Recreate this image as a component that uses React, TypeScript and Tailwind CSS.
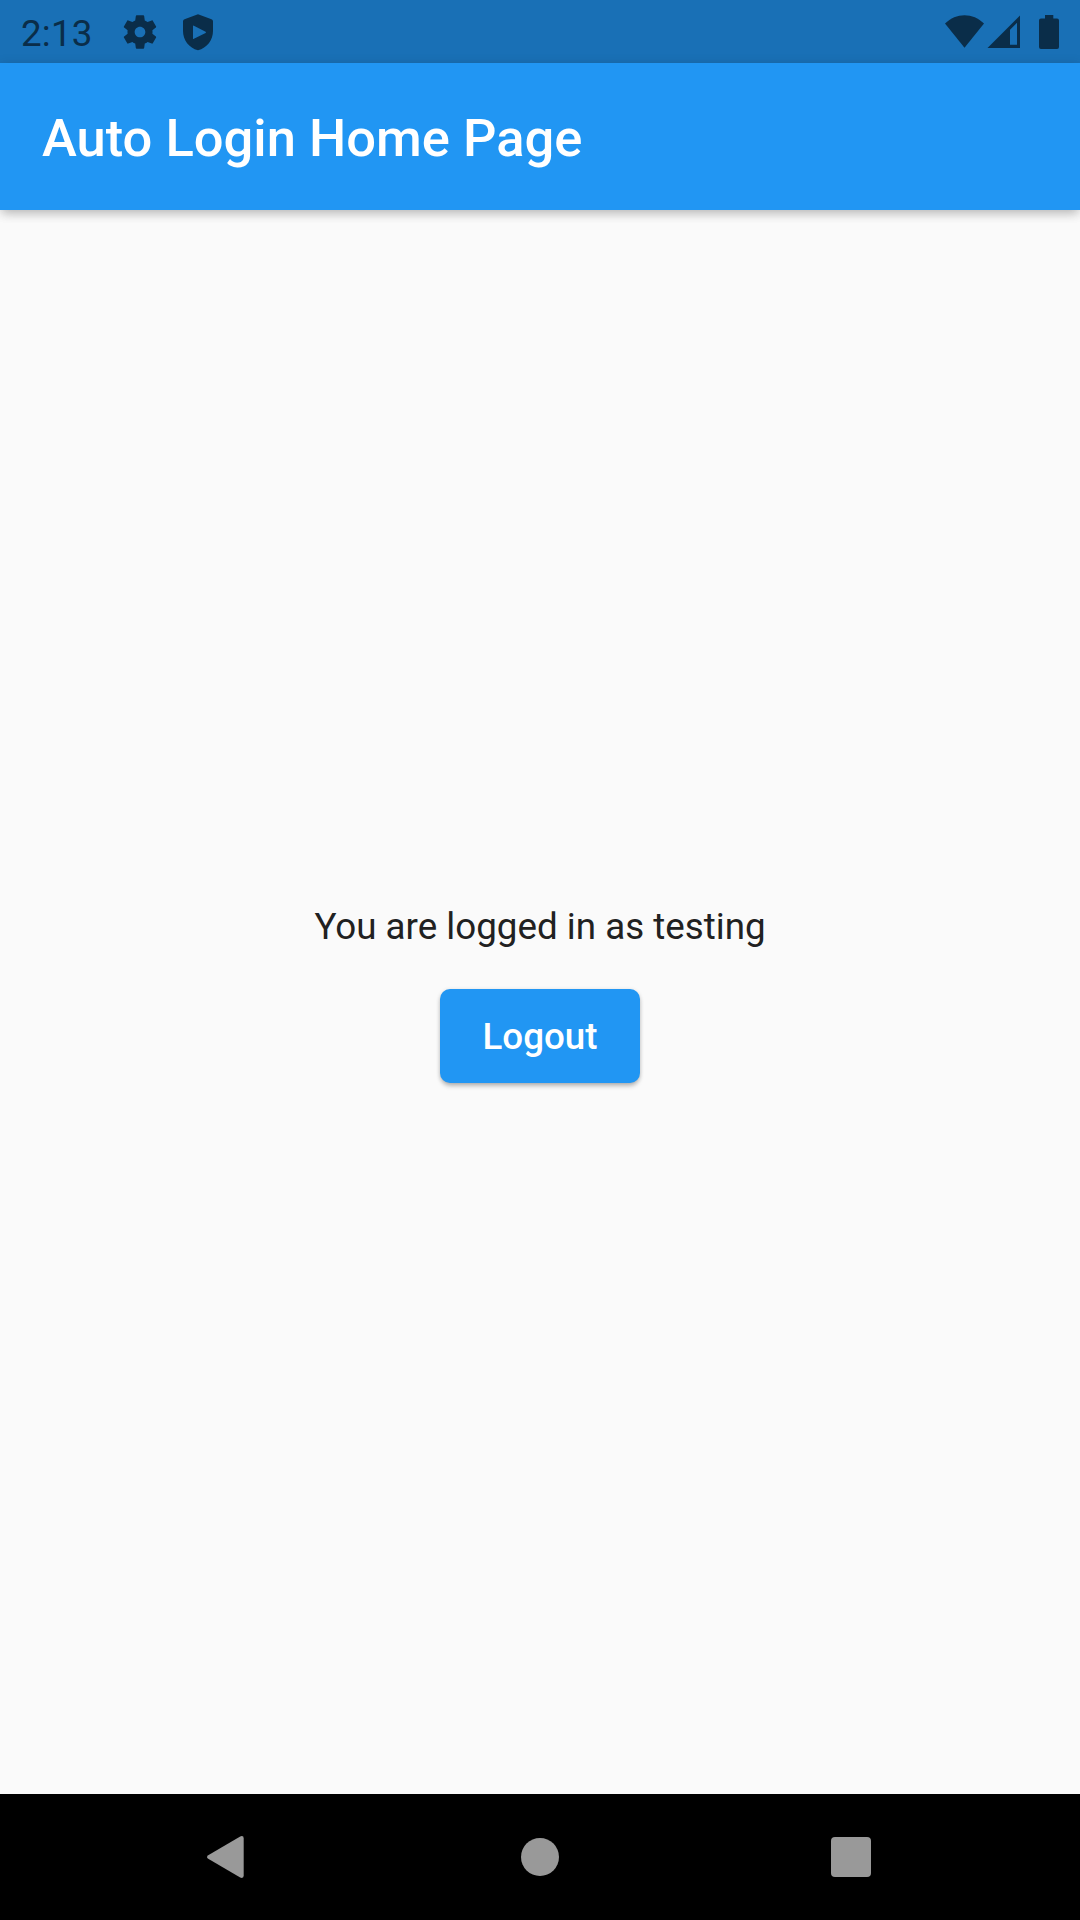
function StatusBar() {
  return (
    <div className="flex h-[63px] shrink-0 items-center bg-[#1970b6] pl-[21px] text-[#0a2d49]">
      <span className="w-[99px] pt-[3px] text-[36.75px] leading-[43px] tracking-[0.2px]">2:13</span>
      <svg className="h-[40px] w-[40px] shrink-0" viewBox="0 0 24 24" fill="currentColor">
        <path d="M19.43 12.98c.04-.32.07-.64.07-.98s-.03-.66-.07-.98l2.11-1.65c.19-.15.24-.42.12-.64l-2-3.46c-.12-.22-.39-.3-.61-.22l-2.49 1c-.52-.4-1.08-.73-1.69-.98l-.38-2.65C14.46 2.18 14.25 2 14 2h-4c-.25 0-.46.18-.49.42l-.38 2.65c-.61.25-1.17.59-1.69.98l-2.49-1c-.23-.09-.49 0-.61.22l-2 3.46c-.13.22-.07.49.12.64l2.11 1.65c-.04.32-.07.65-.07.98s.03.66.07.98l-2.11 1.65c-.19.15-.24.42-.12.64l2 3.46c.12.22.39.3.61.22l2.49-1c.52.4 1.08.73 1.69.98l.38 2.65c.03.24.24.42.49.42h4c.25 0 .46-.18.49-.42l.38-2.65c.61-.25 1.17-.59 1.69-.98l2.49 1c.23.09.49 0 .61-.22l2-3.46c.12-.22.07-.49-.12-.64l-2.11-1.65zM12 15.200c-1.770 0-3.200-1.430-3.200-3.200s1.430-3.200 3.200-3.200 3.200 1.430 3.200 3.200-1.430 3.200-3.200 3.200z" />
      </svg>
      <svg className="ml-[20px] h-[40px] w-[36px] shrink-0" viewBox="0 0 36 40" fill="currentColor">
        <path
          fillRule="evenodd"
          d="M18 2.300 L31.500 7.200 Q33 7.800 33 9.400 V19 C33 28 27 36 18 38.300 C9 36 3 28 3 19 V9.400 Q3 7.800 4.500 7.200 Z M13 14.200 V26.400 Q13 27.300 13.900 26.800 L25.600 20.900 Q26.400 20.300 25.600 19.700 L13.900 13.700 Q13 13.300 13 14.200 Z"
        />
      </svg>
      <svg className="mr-[21px] ml-auto h-[36px] w-[114px] shrink-0" viewBox="945 13 114 36" fill="currentColor">
        <path d="M945 22.500 C956 11.400 973 11.400 984 22.500 L964.500 46.700 Z" />
        <path fillRule="evenodd" d="M1020 14.500 V47 H987.500 Z M1010 28.700 V43.700 H1017 V21.700 Z" />
        <path d="M1045 14 H1053.300 V17.500 H1057 Q1059 17.500 1059 19.500 V46 Q1059 48 1057 48 H1041 Q1039 48 1039 46 V19.500 Q1039 17.500 1041 17.500 H1045 Z" />
      </svg>
    </div>
  );
}

function NavigationBar() {
  return (
    <div className="flex h-[126px] shrink-0 items-center justify-between bg-black pr-[209px] pl-[207px] text-[#999999]">
      <svg className="h-[42px] w-[42px]" viewBox="0 0 42 42" fill="currentColor">
        <path d="M1.200 19.200 L33.200 0.400 Q36.700 -0.800 36.700 2.500 V39.500 Q36.700 42.800 33.200 41.600 L1.200 22.800 Q-1.200 21 1.200 19.200 Z" />
      </svg>
      <div className="h-[38px] w-[38px] rounded-full bg-[#999999]" />
      <div className="h-[40px] w-[40px] rounded-[4px] bg-[#999999]" />
    </div>
  );
}

export default function App() {
  return (
    <div className="flex h-[1920px] w-[1080px] flex-col overflow-hidden bg-[#fafafa] font-['Roboto',sans-serif]">
      <StatusBar />
      <header className="flex h-[147px] shrink-0 items-center bg-[#2196f3] px-[42px] pt-[2px] shadow-[0_5px_10px_-2px_rgba(0,0,0,0.2),0_2px_12px_rgba(0,0,0,0.12)]">
        <h1 className="text-[52.5px] leading-[62px] font-medium text-white">Auto Login Home Page</h1>
      </header>
      <main className="flex flex-1 flex-col items-center pt-[695px]">
        <p className="text-[36.75px] leading-[43px] text-[#212121]">You are logged in as testing</p>
        <button className="mt-[41px] flex h-[94px] w-[200px] items-center justify-center rounded-[10px] bg-[#2196f3] text-[36.75px] leading-[43px] font-medium text-white shadow-[0_4px_5px_-1px_rgba(0,0,0,0.22),0_1px_4px_rgba(0,0,0,0.16)]">
          Logout
        </button>
      </main>
      <NavigationBar />
    </div>
  );
}
